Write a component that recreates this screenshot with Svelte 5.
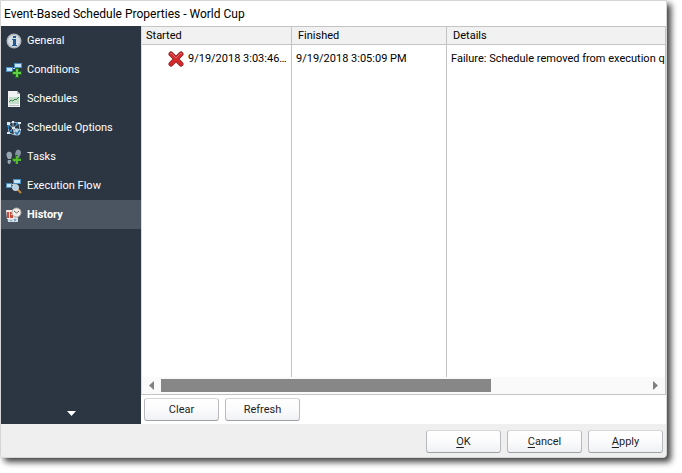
<script lang="ts">
    type Page = { id: string; label: string };

    const pages: Page[] = [
        { id: "general", label: "General" },
        { id: "conditions", label: "Conditions" },
        { id: "schedules", label: "Schedules" },
        { id: "options", label: "Schedule Options" },
        { id: "tasks", label: "Tasks" },
        { id: "flow", label: "Execution Flow" },
        { id: "history", label: "History" },
    ];

    const initialRows = [
        {
            started: "9/19/2018 3:03:46 PM",
            finished: "9/19/2018 3:05:09 PM",
            details: "Failure: Schedule removed from execution queue",
        },
    ];

    let active = $state("history");
    let rows = $state([...initialRows]);

    function clearRows() {
        rows = [];
    }

    function refreshRows() {
        rows = [...initialRows];
    }
</script>

{#snippet pageIcon(id: string)}
    <svg class="icon" viewBox="0 0 16 16" width="16" height="16" aria-hidden="true">
        {#if id === "general"}
            <circle cx="8" cy="8" r="7.5" fill="#aeb6bd" />
            <circle cx="8" cy="8" r="6" fill="#d5dce2" />
            <path d="M7 3h3v2H7zM6 6h4v6h1v1H6v-1h1V7H6z" fill="#1f5a92" />
        {:else if id === "conditions"}
            <path d="M6 6.5h3" stroke="#c5d6e2" />
            <path d="M8 1h8v5H8zM0 5h7v5H0z" fill="#4a8fc4" />
            <path d="M9 2h6v3H9zM1 6h5v3H1z" fill="#c6e3f7" />
            <path d="M9 6h4v3h3v4h-3v3H9v-3H6V9h3z" fill="#1e6c19" />
            <path d="M10 7h2v3h3v2h-3v3h-2v-3H7v-2h3z" fill="#62cf46" />
        {:else if id === "schedules"}
            <path d="M2 0h9l3 3v13H2z" fill="#f0f2f2" />
            <path d="M11 0v3h3z" fill="#aab4b8" />
            <path d="M3 6h10v7H3z" fill="#c5dccb" />
            <path d="M3 11l2-2 2 1 2-2 1 1 3-3" fill="none" stroke="#2f8d43" />
            <path d="M3 14.5h10" stroke="#b6bcc0" />
        {:else if id === "options"}
            <path
                d="M2 4l5-2 6 1 1 8-5 4-6-2zM2 4l5 4 6-5M3 13l4-5 7 2M7 2v6l2 6"
                fill="none"
                stroke="#9bb6cb"
            />
            <path
                d="M1 2h3v3H1zM6 1h2v2H6zM12 2h3v2h-3zM6 7h3v2H6zM1 12h3v2H1zM13 9h2v2h-2z"
                fill="#dcecf7"
            />
            <path d="M2 5h1v4H2zM10 3h2v2h-2zM4 10h2v2H4z" fill="#2589cd" />
            <circle cx="11" cy="12" r="3.5" fill="#b8d4e7" />
            <path d="M9 12l2 2 3-4" fill="none" stroke="#2b73ad" stroke-width="1.5" />
        {:else if id === "tasks"}
            <path
                d="M2 3c2-1 4 0 4 3 0 2-1 3-1 4L2 10C1 8-1 5 2 3zM2 11l3 0c0 3-1 4-2 4s-2-2-1-4z"
                fill="#98a6b0"
            />
            <path
                d="M11 1c3-1 4 1 4 3s-2 3-2 5H9c0-2 0-7 2-8zM8 10h3c0 3-1 3-2 3s-2-1-1-3z"
                fill="#84949f"
            />
            <path d="M9 6h3v3h3v3h-3v3H9v-3H6V9h3z" fill="#246e13" />
            <path d="M10 7h2v3h3v2h-3v3h-2v-3H7v-2h3z" fill="#54bb2d" />
        {:else if id === "flow"}
            <path d="M5 6.5h3" stroke="#c5d6e2" />
            <path d="M7 1h8v5H7zM0 5h6v5H0z" fill="#4a8fc4" />
            <path d="M8 2h6v3H8zM1 6h4v3H1z" fill="#c6e3f7" />
            <path d="M11 11l4 4" stroke="#c38a3e" stroke-width="2" />
            <circle cx="9.5" cy="9.5" r="3" fill="#b1d3e7" stroke="#e0e7ea" />
        {:else}
            <path d="M1 6h11v9H2z" fill="#cfdae5" />
            <path d="M0 3h8v9H1z" fill="#f4e6e1" />
            <path d="M1 5h2v6H1zM4 5h3v2H5v1h2v3H4z" fill="#cd4938" />
            <path d="M8 12h2v2H8zM4 13h2v1H4z" fill="#7da3cb" />
            <circle cx="10.5" cy="5.5" r="4.5" fill="#f2efeb" stroke="#b0aba5" />
            <path d="M8 4l2.5 2L13 4" fill="none" stroke="#67625e" />
        {/if}
    </svg>
{/snippet}

<div class="desktop">
    <div class="dialog" role="dialog" aria-labelledby="dialog-title">
        <h1 id="dialog-title">Event-Based Schedule Properties - World Cup</h1>

        <div class="body">
            <nav aria-label="Schedule pages">
                {#each pages as page}
                    <button
                        class="nav-item"
                        class:active={active === page.id}
                        aria-current={active === page.id ? "page" : undefined}
                        onclick={() => (active = page.id)}
                    >
                        {@render pageIcon(page.id)}
                        <span>{page.label}</span>
                    </button>
                {/each}
                <button class="more" aria-label="More pages">
                    <svg viewBox="0 0 9 5" width="9" height="5"><path d="M0 0h9L4.500 5z" fill="#fff" /></svg>
                </button>
            </nav>

            <main>
                <div class="list">
                    <table>
                        <colgroup>
                            <col class="col-started" />
                            <col class="col-finished" />
                            <col />
                        </colgroup>
                        <thead>
                            <tr>
                                <th>Started</th>
                                <th>Finished</th>
                                <th>Details</th>
                            </tr>
                        </thead>
                        <tbody>
                            {#each rows as row}
                                <tr class="entry">
                                    <td>
                                        <div class="started">
                                            <svg viewBox="0 0 16 16" width="16" height="16" aria-label="Failed">
                                                <path
                                                    d="M3 3l10 10M13 3L3 13"
                                                    stroke="#8f2426"
                                                    stroke-width="5"
                                                    stroke-linecap="round"
                                                />
                                                <path
                                                    d="M3 3l10 10M13 3L3 13"
                                                    stroke="#d42a2c"
                                                    stroke-width="3.5"
                                                    stroke-linecap="round"
                                                />
                                                <path
                                                    d="M2 3l1-1 5 5 5-5 1 1"
                                                    fill="none"
                                                    stroke="#d9696a"
                                                />
                                            </svg>
                                            <span>{row.started}</span>
                                        </div>
                                    </td>
                                    <td>{row.finished}</td>
                                    <td>{row.details}</td>
                                </tr>
                            {/each}
                            <tr class="filler"><td></td><td></td><td></td></tr>
                        </tbody>
                    </table>
                    <div class="scrollbar">
                        <button aria-label="Scroll left">
                            <svg viewBox="0 0 5 9" width="5" height="9"><path d="M5 0v9L0 4.500z" /></svg>
                        </button>
                        <div class="track"><div class="thumb"></div></div>
                        <button aria-label="Scroll right">
                            <svg viewBox="0 0 5 9" width="5" height="9"><path d="M0 0v9l5-4.500z" /></svg>
                        </button>
                    </div>
                </div>
                <div class="toolbar">
                    <button class="btn" onclick={clearRows}>Clear</button>
                    <button class="btn" onclick={refreshRows}>Refresh</button>
                </div>
            </main>
        </div>

        <footer>
            <button class="btn"><u>O</u>K</button>
            <button class="btn"><u>C</u>ancel</button>
            <button class="btn"><u>A</u>pply</button>
        </footer>
    </div>
</div>

<style>
    :global(body) {
        background: #fff;
    }

    .desktop {
        box-sizing: border-box;
        min-height: 100vh;
        display: flex;
        padding: 0 15px 15px 0;
        overflow: hidden;
    }

    .dialog {
        flex: 1;
        min-width: 0;
        display: flex;
        flex-direction: column;
        border: 1px solid #d5d5d5;
        border-radius: 0 0 4px 4px;
        background: #fff;
        box-shadow: 4px 4px 6px 0 rgba(0, 0, 0, 0.75);
        font-family: Roboto, "Noto Sans", sans-serif;
        font-size: 11px;
        line-height: 16px;
        color: #000;
    }

    h1 {
        margin: 0;
        padding: 3px 3px 2px;
        font-size: 12px;
        line-height: 20px;
        font-weight: 400;
    }

    button {
        font: inherit;
        cursor: pointer;
    }

    .body {
        flex: 1;
        display: flex;
        min-height: 0;
    }

    nav {
        width: 140px;
        flex: none;
        display: flex;
        flex-direction: column;
        background: #2b3642;
    }

    .nav-item {
        display: flex;
        align-items: center;
        gap: 5px;
        height: 29px;
        padding: 0 5px;
        border: none;
        background: none;
        color: #fff;
        text-align: left;
        white-space: nowrap;
    }

    .nav-item.active {
        background: #4b5561;
        font-weight: 700;
    }

    .icon {
        flex: none;
    }

    .more {
        display: flex;
        justify-content: center;
        align-items: center;
        height: 21px;
        margin-top: auto;
        padding: 0;
        border: none;
        background: none;
    }

    main {
        flex: 1;
        min-width: 0;
        display: flex;
        flex-direction: column;
    }

    .list {
        flex: 1;
        min-height: 0;
        display: flex;
        flex-direction: column;
        border: 1px solid #c4c4c4;
        border-left-color: #dcdcdc;
    }

    table {
        flex: 1;
        width: 100%;
        table-layout: fixed;
        border-collapse: separate;
        border-spacing: 0;
    }

    .col-started {
        width: 150px;
    }

    .col-finished {
        width: 155px;
    }

    th,
    td {
        overflow: hidden;
        white-space: nowrap;
        text-align: left;
        border-right: 1px solid #c4c4c4;
    }

    th:last-child,
    td:last-child {
        border-right: none;
    }

    th {
        height: 16px;
        padding: 1px 6px 0;
        border-bottom: 1px solid #c4c4c4;
        background: #f1f1f1;
        font-weight: 400;
    }

    th:first-child {
        padding-left: 4px;
    }

    td {
        padding: 0 0 0 4px;
    }

    .entry td {
        height: 28px;
    }

    .started {
        display: flex;
        align-items: center;
        gap: 4px;
        padding: 0 3px 0 22px;
    }

    .started svg {
        flex: none;
    }

    .started span {
        overflow: hidden;
        text-overflow: ellipsis;
    }

    .filler td {
        height: 100%;
    }

    .scrollbar {
        display: flex;
        height: 17px;
        background: #fafafa;
    }

    .scrollbar button {
        width: 19px;
        display: flex;
        justify-content: center;
        align-items: center;
        padding: 0;
        border: none;
        background: none;
        fill: #808080;
    }

    .track {
        flex: 1;
        padding: 2px 0;
    }

    .thumb {
        width: 68%;
        height: 13px;
        background: #878787;
    }

    .toolbar {
        display: flex;
        gap: 6px;
        padding: 3px;
    }

    .btn {
        box-sizing: border-box;
        width: 75px;
        height: 23px;
        padding: 0;
        border: 1px solid #b8babd;
        border-top-color: #d5d6d8;
        border-bottom-color: #a0a2a5;
        border-radius: 3px;
        background: linear-gradient(#fff, #fbfbfc 50%, #eff1f4);
        color: #1e1e1e;
    }

    u {
        text-underline-offset: 2px;
    }

    footer {
        display: flex;
        justify-content: flex-end;
        gap: 6px;
        padding: 6px 3px 4px;
        border-radius: 0 0 3px 3px;
        background: #efefef;
    }
</style>
